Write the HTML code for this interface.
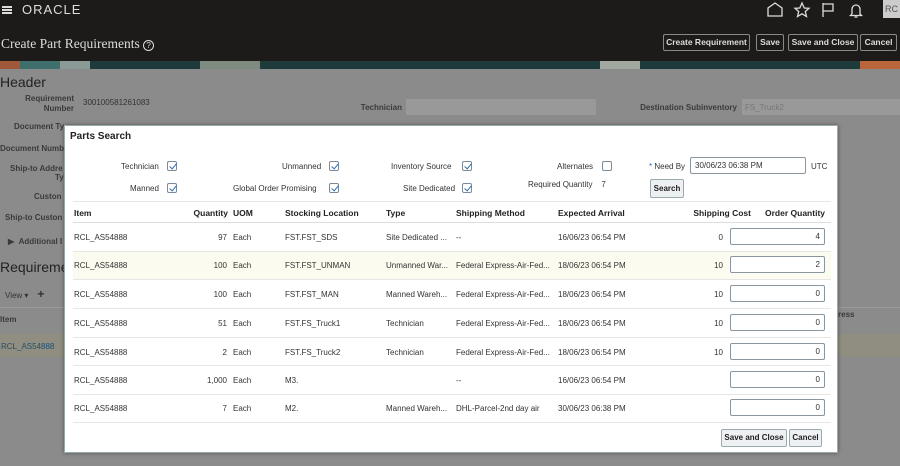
<!DOCTYPE html>
<html><head><meta charset="utf-8"><style>
*{margin:0;padding:0;box-sizing:border-box}
body{width:900px;height:466px;overflow:hidden;position:relative;background:#8b8b8b;font-family:"Liberation Sans",sans-serif;color:#333}
.a{position:absolute;white-space:nowrap}
.top{left:0;top:0;width:900px;height:61px;background:#1c1b1a}
.ban{left:0;top:61px;width:900px;height:8px;background:linear-gradient(90deg,#a0583a 0 20px,#3f6f6c 20px 60px,#8a9a96 60px 90px,#1e3a3a 90px 200px,#7f8a80 200px 260px,#1e3a3a 260px 600px,#a0a8a0 600px 640px,#1e3a3a 640px 860px,#b8663a 860px)}
.btn{position:absolute;top:34px;height:17px;border:1px solid #888;border-radius:2px;color:#ddd;font-size:8.5px;font-weight:bold;line-height:15px;text-align:center}
.lbl{font-size:8px;font-weight:bold;color:#3a3a3a;text-align:right}
.fld{background:#999;height:16px}
.dlg{left:64px;top:125px;width:774px;height:328px;background:#fff;border:1px solid #9aa;box-shadow:0 0 4px rgba(0,0,0,.4)}
.t{font-size:8px;color:#333}
.h{font-size:8.5px;font-weight:bold;color:#222}
.cb{position:absolute;width:10px;height:10px;border:1px solid #7a8a99;border-radius:2px;background:#fff}
.cb.k:after{content:"";position:absolute;left:3px;top:0px;width:3px;height:6px;border:solid #2a6db0;border-width:0 1.5px 1.5px 0;transform:rotate(40deg)}
.inp{position:absolute;width:95px;height:17px;border:1px solid #8a969f;border-radius:2px;background:#fff;font-size:8px;text-align:right;padding-right:4px;line-height:15px}
.sep{position:absolute;left:8px;width:758px;height:1px;background:#e6e6e6}
.sc{left:600px;width:58px;text-align:right}
</style></head><body>
<div class="a top"></div>
<div class="a" style="left:2px;top:6px;width:10px;height:1.5px;background:#ddd;box-shadow:0 3px 0 #ddd,0 6px 0 #ddd"></div>
<div class="a" style="left:22px;top:2px;font-size:13px;color:#ddd;letter-spacing:1px">ORACLE</div>
<svg class="a" style="left:766px;top:1px" width="130" height="18" viewBox="0 0 130 18" fill="none" stroke="#ddd" stroke-width="1.3">
<path d="M2 15V7L9 2L16 7V15Z"/>
<path d="M36 2L38.2 7L43 7.3L39.3 10.5L40.5 15.5L36 12.8L31.5 15.5L32.7 10.5L29 7.3L33.8 7Z"/>
<path d="M57 16V2M57 3H67V10H57"/>
<path d="M86 13V8A4 4 0 0 1 94 8V13L95.5 14.5H84.5L86 13M88.5 16H91.5"/>
</svg>
<div class="a" style="left:883px;top:0;width:17px;height:18px;background:#ccc;color:#555;font-size:9px;line-height:18px;padding-left:2px">RC</div>
<div class="a" style="left:1px;top:36px;font-family:'Liberation Serif',serif;font-size:13.5px;color:#ddd">Create Part Requirements <span style="display:inline-block;width:11px;height:11px;border:1px solid #ddd;border-radius:50%;font-size:8px;text-align:center;line-height:9px;font-family:'Liberation Sans'">?</span></div>
<div class="btn" style="left:663px;width:87px">Create Requirement</div>
<div class="btn" style="left:756px;width:28px">Save</div>
<div class="btn" style="left:788px;width:70px">Save and Close</div>
<div class="btn" style="left:860px;width:37px">Cancel</div>
<div class="a ban"></div>
<div class="a" style="left:0;top:74px;font-size:14px;color:#222">Header</div>
<div class="a lbl" style="left:20px;top:94px;width:54px;line-height:10px">Requirement<br>Number</div>
<div class="a t" style="left:83px;top:98px;color:#333">300100581261083</div>
<div class="a lbl" style="left:340px;top:103px;width:62px">Technician</div>
<div class="a fld" style="left:406px;top:99px;width:190px"></div>
<div class="a lbl" style="left:620px;top:103px;width:117px">Destination Subinventory</div>
<div class="a fld" style="left:742px;top:99px;width:158px;font-size:8px;color:#777;padding:4px 0 0 3px">FS_Truck2</div>
<div class="a lbl" style="left:14px;top:122px">Document Ty</div>
<div class="a lbl" style="left:0;top:144px">Document Numb</div>
<div class="a lbl" style="left:10px;top:164px">Ship-to Addre</div>
<div class="a lbl" style="left:55px;top:173px">Ty</div>
<div class="a lbl" style="left:34px;top:192px">Custon</div>
<div class="a lbl" style="left:5px;top:213px">Ship-to Custon</div>
<div class="a lbl" style="left:8px;top:237px">▶ &nbsp;Additional I</div>
<div class="a" style="left:0;top:259px;font-size:14px;color:#222">Requiremer</div>
<div class="a t" style="left:5px;top:287px;color:#333">View ▾ &nbsp;&nbsp; <b style="font-size:12px">+</b></div>
<div class="a" style="left:0;top:307px;width:900px;height:1px;background:#999"></div>
<div class="a lbl" style="left:0;top:315px">Item</div>
<div class="a lbl" style="left:838px;top:310px">ress</div>
<div class="a" style="left:0;top:334px;width:900px;height:23px;background:#8f8e80"></div>
<div class="a t" style="left:1px;top:342px;color:#20506e">RCL_AS54888</div>

<div class="a dlg">
<div class="a h" style="left:5px;top:5px;font-size:10px">Parts Search</div>
<div class="a t" style="left:56px;top:36px">Technician</div><div class="cb k" style="left:102px;top:35px"></div>
<div class="a t" style="left:217px;top:36px">Unmanned</div><div class="cb k" style="left:264px;top:35px"></div>
<div class="a t" style="left:326px;top:36px">Inventory Source</div><div class="cb k" style="left:397px;top:35px"></div>
<div class="a t" style="left:492px;top:36px">Alternates</div><div class="cb" style="left:537px;top:35px;"></div>
<div class="a t" style="left:65px;top:58px">Manned</div><div class="cb k" style="left:102px;top:57px"></div>
<div class="a t" style="left:168px;top:58px">Global Order Promising</div><div class="cb k" style="left:264px;top:57px"></div>
<div class="a t" style="left:338px;top:58px">Site Dedicated</div><div class="cb k" style="left:397px;top:57px"></div>
<div class="a t" style="left:463px;top:54px">Required Quantity &nbsp;&nbsp; 7</div>
<div class="a t" style="left:584px;top:36px"><span style="color:#2a6db0">*</span> Need By</div>
<div class="a" style="left:625px;top:31px;width:116px;height:17px;border:1px solid #8a969f;border-radius:2px;font-size:8px;line-height:15px;padding-left:4px">30/06/23 06:38 PM</div>
<div class="a t" style="left:746px;top:36px">UTC</div>
<div class="a h" style="left:585px;top:53px;width:34px;height:19px;border:1px solid #9aa;border-radius:2px;background:#eef1f4;font-size:8px;line-height:17px;text-align:center">Search</div>
<div class="sep" style="top:75px"></div>
<div class="a h" style="left:9px;top:82px">Item</div>
<div class="a h" style="left:120px;top:82px;width:43px;text-align:right">Quantity</div>
<div class="a h" style="left:168px;top:82px">UOM</div>
<div class="a h" style="left:220px;top:82px">Stocking Location</div>
<div class="a h" style="left:321px;top:82px">Type</div>
<div class="a h" style="left:391px;top:82px">Shipping Method</div>
<div class="a h" style="left:493px;top:82px">Expected Arrival</div>
<div class="a h" style="left:600px;top:82px;width:86px;text-align:right">Shipping Cost</div>
<div class="a h" style="left:680px;top:82px;width:80px;text-align:right">Order Quantity</div>
<div class="sep" style="top:96px;background:#ddd"></div>
<div class="a" style="left:8px;top:125px;width:758px;height:28px;background:#fbfbef"></div>
<div class="sep" style="top:125px"></div><div class="sep" style="top:153px"></div><div class="sep" style="top:182px"></div><div class="sep" style="top:211px"></div><div class="sep" style="top:239px"></div><div class="sep" style="top:268px"></div><div class="sep" style="top:296px"></div>

<div class="a t" style="left:9px;top:107px">RCL_AS54888</div><div class="a t" style="left:120px;top:107px;width:42px;text-align:right">97</div><div class="a t" style="left:168px;top:107px">Each</div><div class="a t" style="left:220px;top:107px">FST.FST_SDS</div><div class="a t" style="left:321px;top:107px">Site Dedicated ...</div><div class="a t" style="left:391px;top:107px">--</div><div class="a t" style="left:493px;top:107px">16/06/23 06:54 PM</div><div class="a t sc" style="top:107px">0</div><div class="inp" style="left:665px;top:102px">4</div>

<div class="a t" style="left:9px;top:135px">RCL_AS54888</div><div class="a t" style="left:120px;top:135px;width:42px;text-align:right">100</div><div class="a t" style="left:168px;top:135px">Each</div><div class="a t" style="left:220px;top:135px">FST.FST_UNMAN</div><div class="a t" style="left:321px;top:135px">Unmanned War...</div><div class="a t" style="left:391px;top:135px">Federal Express-Air-Fed...</div><div class="a t" style="left:493px;top:135px">18/06/23 06:54 PM</div><div class="a t sc" style="top:135px">10</div><div class="inp" style="left:665px;top:130px">2</div>

<div class="a t" style="left:9px;top:164px">RCL_AS54888</div><div class="a t" style="left:120px;top:164px;width:42px;text-align:right">100</div><div class="a t" style="left:168px;top:164px">Each</div><div class="a t" style="left:220px;top:164px">FST.FST_MAN</div><div class="a t" style="left:321px;top:164px">Manned Wareh...</div><div class="a t" style="left:391px;top:164px">Federal Express-Air-Fed...</div><div class="a t" style="left:493px;top:164px">18/06/23 06:54 PM</div><div class="a t sc" style="top:164px">10</div><div class="inp" style="left:665px;top:159px">0</div>

<div class="a t" style="left:9px;top:193px">RCL_AS54888</div><div class="a t" style="left:120px;top:193px;width:42px;text-align:right">51</div><div class="a t" style="left:168px;top:193px">Each</div><div class="a t" style="left:220px;top:193px">FST.FS_Truck1</div><div class="a t" style="left:321px;top:193px">Technician</div><div class="a t" style="left:391px;top:193px">Federal Express-Air-Fed...</div><div class="a t" style="left:493px;top:193px">18/06/23 06:54 PM</div><div class="a t sc" style="top:193px">10</div><div class="inp" style="left:665px;top:188px">0</div>

<div class="a t" style="left:9px;top:222px">RCL_AS54888</div><div class="a t" style="left:120px;top:222px;width:42px;text-align:right">2</div><div class="a t" style="left:168px;top:222px">Each</div><div class="a t" style="left:220px;top:222px">FST.FS_Truck2</div><div class="a t" style="left:321px;top:222px">Technician</div><div class="a t" style="left:391px;top:222px">Federal Express-Air-Fed...</div><div class="a t" style="left:493px;top:222px">18/06/23 06:54 PM</div><div class="a t sc" style="top:222px">10</div><div class="inp" style="left:665px;top:217px">0</div>

<div class="a t" style="left:9px;top:250px">RCL_AS54888</div><div class="a t" style="left:120px;top:250px;width:42px;text-align:right">1,000</div><div class="a t" style="left:168px;top:250px">Each</div><div class="a t" style="left:220px;top:250px">M3.</div><div class="a t" style="left:391px;top:250px">--</div><div class="a t" style="left:493px;top:250px">16/06/23 06:54 PM</div><div class="inp" style="left:665px;top:245px">0</div>

<div class="a t" style="left:9px;top:278px">RCL_AS54888</div><div class="a t" style="left:120px;top:278px;width:42px;text-align:right">7</div><div class="a t" style="left:168px;top:278px">Each</div><div class="a t" style="left:220px;top:278px">M2.</div><div class="a t" style="left:321px;top:278px">Manned Wareh...</div><div class="a t" style="left:391px;top:278px">DHL-Parcel-2nd day air</div><div class="a t" style="left:493px;top:278px">30/06/23 06:38 PM</div><div class="inp" style="left:665px;top:273px">0</div>

<div class="a h" style="left:656px;top:303px;width:66px;height:18px;border:1px solid #9aa;border-radius:2px;background:#eef1f4;font-size:8px;line-height:16px;text-align:center">Save and Close</div>
<div class="a h" style="left:724px;top:303px;width:33px;height:18px;border:1px solid #9aa;border-radius:2px;background:#eef1f4;font-size:8px;line-height:16px;text-align:center">Cancel</div>
</div>
</body></html>
